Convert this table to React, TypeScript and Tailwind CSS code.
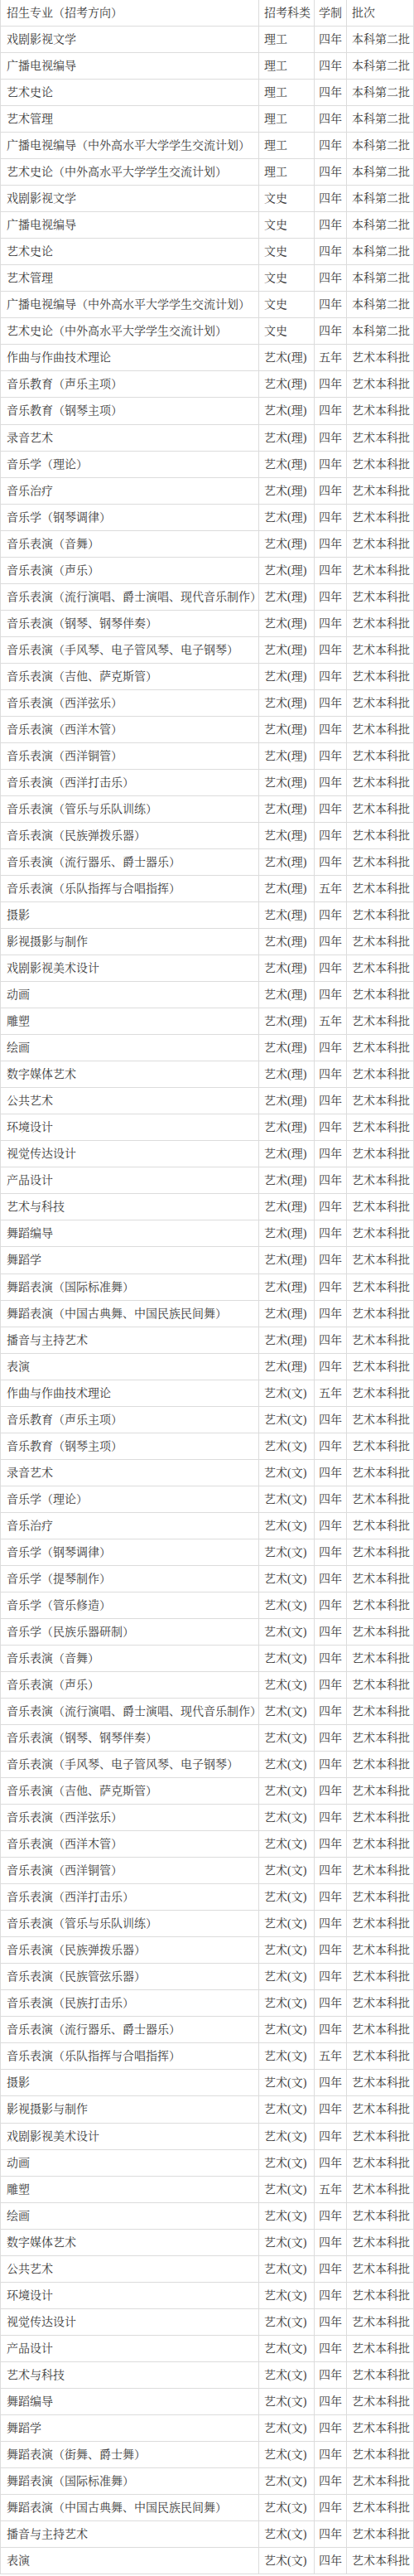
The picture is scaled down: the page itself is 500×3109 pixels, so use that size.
const LI = '理工';
const WS = '文史';
const AL = '艺术(理)';
const AW = '艺术(文)';

type Row = [string, string, string, string];

const basic = ['戏剧影视文学', '广播电视编导', '艺术史论', '艺术管理', '广播电视编导（中外高水平大学学生交流计划）', '艺术史论（中外高水平大学学生交流计划）'];

const artLi = [
  '作曲与作曲技术理论',
  '音乐教育（声乐主项）',
  '音乐教育（钢琴主项）',
  '录音艺术',
  '音乐学（理论）',
  '音乐治疗',
  '音乐学（钢琴调律）',
  '音乐表演（音舞）',
  '音乐表演（声乐）',
  '音乐表演（流行演唱、爵士演唱、现代音乐制作）',
  '音乐表演（钢琴、钢琴伴奏）',
  '音乐表演（手风琴、电子管风琴、电子钢琴）',
  '音乐表演（吉他、萨克斯管）',
  '音乐表演（西洋弦乐）',
  '音乐表演（西洋木管）',
  '音乐表演（西洋铜管）',
  '音乐表演（西洋打击乐）',
  '音乐表演（管乐与乐队训练）',
  '音乐表演（民族弹拨乐器）',
  '音乐表演（流行器乐、爵士器乐）',
  '音乐表演（乐队指挥与合唱指挥）',
  '摄影',
  '影视摄影与制作',
  '戏剧影视美术设计',
  '动画',
  '雕塑',
  '绘画',
  '数字媒体艺术',
  '公共艺术',
  '环境设计',
  '视觉传达设计',
  '产品设计',
  '艺术与科技',
  '舞蹈编导',
  '舞蹈学',
  '舞蹈表演（国际标准舞）',
  '舞蹈表演（中国古典舞、中国民族民间舞）',
  '播音与主持艺术',
  '表演',
];

const artWen = [
  '作曲与作曲技术理论',
  '音乐教育（声乐主项）',
  '音乐教育（钢琴主项）',
  '录音艺术',
  '音乐学（理论）',
  '音乐治疗',
  '音乐学（钢琴调律）',
  '音乐学（提琴制作）',
  '音乐学（管乐修造）',
  '音乐学（民族乐器研制）',
  '音乐表演（音舞）',
  '音乐表演（声乐）',
  '音乐表演（流行演唱、爵士演唱、现代音乐制作）',
  '音乐表演（钢琴、钢琴伴奏）',
  '音乐表演（手风琴、电子管风琴、电子钢琴）',
  '音乐表演（吉他、萨克斯管）',
  '音乐表演（西洋弦乐）',
  '音乐表演（西洋木管）',
  '音乐表演（西洋铜管）',
  '音乐表演（西洋打击乐）',
  '音乐表演（管乐与乐队训练）',
  '音乐表演（民族弹拨乐器）',
  '音乐表演（民族管弦乐器）',
  '音乐表演（民族打击乐）',
  '音乐表演（流行器乐、爵士器乐）',
  '音乐表演（乐队指挥与合唱指挥）',
  '摄影',
  '影视摄影与制作',
  '戏剧影视美术设计',
  '动画',
  '雕塑',
  '绘画',
  '数字媒体艺术',
  '公共艺术',
  '环境设计',
  '视觉传达设计',
  '产品设计',
  '艺术与科技',
  '舞蹈编导',
  '舞蹈学',
  '舞蹈表演（街舞、爵士舞）',
  '舞蹈表演（国际标准舞）',
  '舞蹈表演（中国古典舞、中国民族民间舞）',
  '播音与主持艺术',
  '表演',
];

// five-year programmes
const fiveYear = new Set(['作曲与作曲技术理论', '音乐表演（乐队指挥与合唱指挥）', '雕塑']);

const art = (list: string[], kind: string): Row[] =>
  list.map((name) => [name, kind, fiveYear.has(name) ? '五年' : '四年', '艺术本科批']);

const rows: Row[] = [
  ...basic.map((n): Row => [n, LI, '四年', '本科第二批']),
  ...basic.map((n): Row => [n, WS, '四年', '本科第二批']),
  ...art(artLi, AL),
  ...art(artWen, AW),
];

function TableRow({ cells }: { cells: Row }) {
  return (
    <div className="grid grid-cols-[312px_67px_39px_1fr] h-[32.04px] border-b border-[#dcdcdc]">
      <div className="flex items-center pt-px pl-[7px] border-r border-[#dcdcdc] whitespace-nowrap">{cells[0]}</div>
      <div className="flex items-center pt-px pl-[6px] border-r border-[#dcdcdc] whitespace-nowrap">{cells[1]}</div>
      <div className="flex items-center pt-px pl-[5px] border-r border-[#dcdcdc] whitespace-nowrap">{cells[2]}</div>
      <div className="flex items-center pt-px pl-[6px] whitespace-nowrap">{cells[3]}</div>
    </div>
  );
}

export default function App() {
  return (
    <div
      className="w-[500px] bg-white text-[#3a3a3a] text-[14px] leading-none border-x border-[#dcdcdc]"
      style={{ fontFamily: '"Liberation Serif", "Noto Serif CJK SC", "Noto Sans CJK SC", serif' }}
    >
      <TableRow cells={['招生专业（招考方向）', '招考科类', '学制', '批次']} />
      {rows.map((r, i) => (
        <TableRow key={i} cells={r} />
      ))}
    </div>
  );
}
